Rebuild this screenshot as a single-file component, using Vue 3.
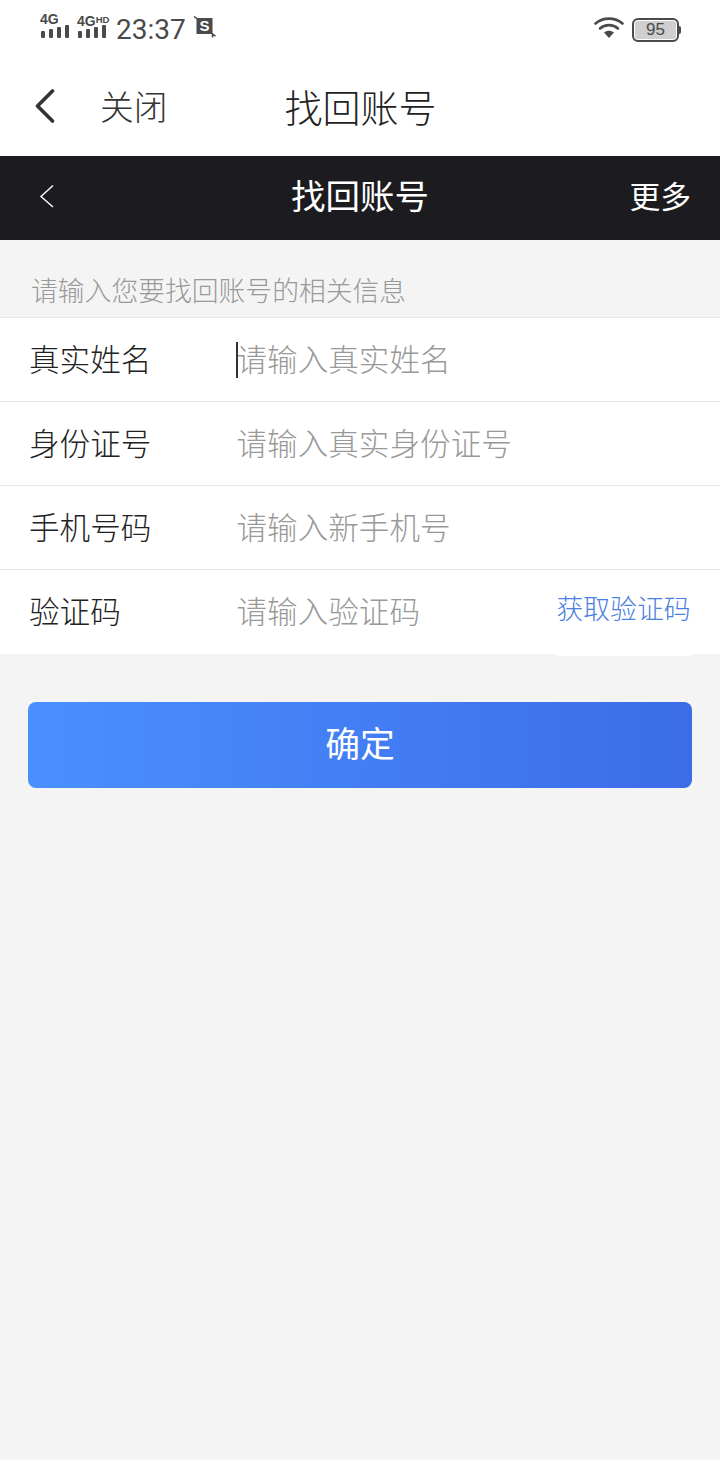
<script setup>
const rows = [
  { label: '真实姓名', placeholder: '请输入真实姓名', caret: true },
  { label: '身份证号', placeholder: '请输入真实身份证号' },
  { label: '手机号码', placeholder: '请输入新手机号' },
  { label: '验证码', placeholder: '请输入验证码', action: '获取验证码' }
]
</script>

<template>
  <div class="page">
    <header class="status">
      <div class="signals">
        <div class="signal">
          <span class="net">4G</span>
          <svg width="29" height="13" viewBox="0 0 29 13"><g fill="#4a4a4a"><rect x="0" y="6" width="4" height="7" rx="1"/><rect x="8" y="4" width="4" height="9" rx="1"/><rect x="16" y="2" width="4" height="11" rx="1"/><rect x="24" y="0" width="4" height="13" rx="1"/></g></svg>
        </div>
        <div class="signal">
          <span class="net">4G<small>HD</small></span>
          <svg width="29" height="13" viewBox="0 0 29 13"><g fill="#4a4a4a"><rect x="0" y="6" width="4" height="7" rx="1"/><rect x="8" y="4" width="4" height="9" rx="1"/><rect x="16" y="2" width="4" height="11" rx="1"/><rect x="24" y="0" width="4" height="13" rx="1"/></g></svg>
        </div>
        <span class="time">23:37</span>
        <svg class="shot" width="22" height="22" viewBox="0 0 22 22">
          <rect x="2.500" y="2" width="16" height="16" fill="#4a4a4a"/>
          <path d="M0 0.500 L3 2.500 M18 18 L21.500 20 M18.500 17 v4.500" stroke="#4a4a4a" stroke-width="1.500" fill="none"/>
          <text x="10.500" y="15" text-anchor="middle" class="shot-s">S</text>
        </svg>
      </div>
      <div class="sys">
        <svg width="30" height="24" viewBox="0 0 30 24">
          <g fill="none" stroke="#4a4a4a" stroke-width="2.600" stroke-linecap="round">
            <path d="M1.500 7.500 C9 1 21 1 28.500 7.500"/>
            <path d="M6 12.500 C11 8 19 8 24 12.500"/>
          </g>
          <path d="M10 16.500 C13 14 17 14 20 16.500 L15 22 Z" fill="#4a4a4a"/>
        </svg>
        <div class="battery">
          <div class="cell"><span>95</span></div>
          <i class="nub"></i>
        </div>
      </div>
    </header>

    <nav class="nav">
      <svg class="nav-back" width="22" height="34" viewBox="0 0 22 34">
        <path d="M18.500 2 L3.500 17 L18.500 32" fill="none" stroke="#333" stroke-width="3.600" stroke-linecap="round" stroke-linejoin="round"/>
      </svg>
      <span class="nav-close">关闭</span>
      <h1 class="nav-title">找回账号</h1>
    </nav>

    <div class="bar">
      <svg class="bar-back" width="16" height="24" viewBox="0 0 16 24">
        <path d="M14 1.500 L2 12.500 L14 23" fill="none" stroke="#fff" stroke-width="1.400"/>
      </svg>
      <h2 class="bar-title">找回账号</h2>
      <span class="bar-more">更多</span>
    </div>

    <p class="hint">请输入您要找回账号的相关信息</p>

    <section class="form">
      <div v-for="row in rows" :key="row.label" class="row">
        <span class="label">{{ row.label }}</span>
        <span class="field" :class="{ focused: row.caret }">{{ row.placeholder }}</span>
        <span v-if="row.action" class="action">{{ row.action }}</span>
      </div>
    </section>

    <button class="confirm" type="button">确定</button>
  </div>
</template>

<style>
html, body { margin: 0; background: #f4f4f5; }
</style>

<style scoped>
.page {
  width: 720px;
  height: 1460px;
  overflow: hidden;
  background: #f4f4f5;
  font-family: "Noto Sans CJK SC", "Liberation Sans", sans-serif;
  font-weight: 300;
  color: #333;
}
.status {
  height: 56px;
  background: #fff;
  display: flex;
  align-items: flex-start;
  justify-content: space-between;
  padding: 0 39px 0 41px;
  box-sizing: border-box;
}
.signals { display: flex; align-items: flex-start; }
.signal {
  width: 37px;
  padding-top: 13px;
  display: flex;
  flex-direction: column;
}
.signal svg { display: block; margin-top: -1px; }
.net {
  height: 13px;
  font: 700 14px/13px "Liberation Sans", sans-serif;
  color: #4a4a4a;
  margin-left: -1px;
  white-space: nowrap;
}
.net small { font-size: 9.500px; vertical-align: 3px; }
.time {
  margin-left: 1px;
  font: 400 28px/34px Roboto, "Liberation Sans", sans-serif;
  color: #4a4a4a;
  padding-top: 13px;
}
.shot { margin: 16px 0 0 8px; }
.shot-s { font: 700 15px "Liberation Sans", sans-serif; fill: #fff; }
.sys { display: flex; align-items: flex-start; padding-top: 16px; }
.battery { display: flex; align-items: center; margin: 2px 0 0 8px; }
.cell {
  width: 43px;
  height: 20px;
  border: 2px solid #4a4a4a;
  border-radius: 6px;
  background: #cfcfcf;
  box-shadow: inset 0 0 0 1px #fff;
  display: flex;
  align-items: center;
  justify-content: center;
  font: 400 17px/20px "Liberation Sans", sans-serif;
  color: #4a4a4a;
}
.nub { width: 2px; height: 8px; background: #4a4a4a; border-radius: 0 2px 2px 0; }
.nav {
  height: 100px;
  background: #fff;
  display: flex;
  align-items: center;
  position: relative;
}
.nav-back { margin: 0 0 0 34px; }
.nav-close { margin: 0 0 1px 44px; font-size: 33.800px; line-height: 50px; color: #333; }
.nav-title {
  margin: 0 0 0 117px;
  font-size: 38px;
  font-weight: 300;
  line-height: 50px;
  color: #222;
}
.bar {
  height: 84px;
  background: #1c1c20;
  color: #fff;
  display: grid;
  grid-template-columns: 1fr auto 1fr;
  align-items: center;
  font-weight: 400;
}
.bar-back { margin: -5px 0 0 39px; }
.bar-title { margin: 0 0 8px; font-size: 34.500px; font-weight: 400; line-height: 48px; }
.bar-more { justify-self: end; margin: 0 29px 6px 0; font-size: 30.800px; line-height: 46px; }
.hint {
  margin: 0;
  height: 77px;
  box-sizing: border-box;
  padding: 30px 0 0 31px;
  font-size: 26.800px;
  line-height: 40px;
  color: #999;
}
.form { background: #fff; }
.row {
  height: 84px;
  box-sizing: border-box;
  border-top: 1px solid #e6e6e6;
  padding-left: 29px;
  display: flex;
  align-items: center;
}
.row:last-child { height: 85px; }
.label { width: 207.500px; font-size: 30.600px; line-height: 44px; margin-bottom: 4px; color: #222; }
.field { flex: 1; font-size: 30.600px; line-height: 44px; margin-bottom: 4px; color: #999; }
.focused { position: relative; }
.focused::before {
  content: "";
  position: absolute;
  left: -1px;
  top: 6px;
  width: 2px;
  height: 36px;
  background: #333;
}
.action {
  align-self: stretch;
  width: 137px;
  margin: 0 28px -2px 0;
  background: #fff;
  border-radius: 0 0 4px 4px;
  text-align: center;
  font-size: 26.800px;
  line-height: 76px;
  color: #4a80e0;
}
.confirm {
  display: block;
  width: 664px;
  height: 86px;
  margin: 48px 28px 0;
  border: 0;
  border-radius: 8px;
  padding: 0 0 6px;
  background: linear-gradient(90deg, #4a90ff 0%, #3c6ce8 100%);
  color: #fff;
  font: 400 34.800px/80px "Noto Sans CJK SC", sans-serif;
}
</style>
